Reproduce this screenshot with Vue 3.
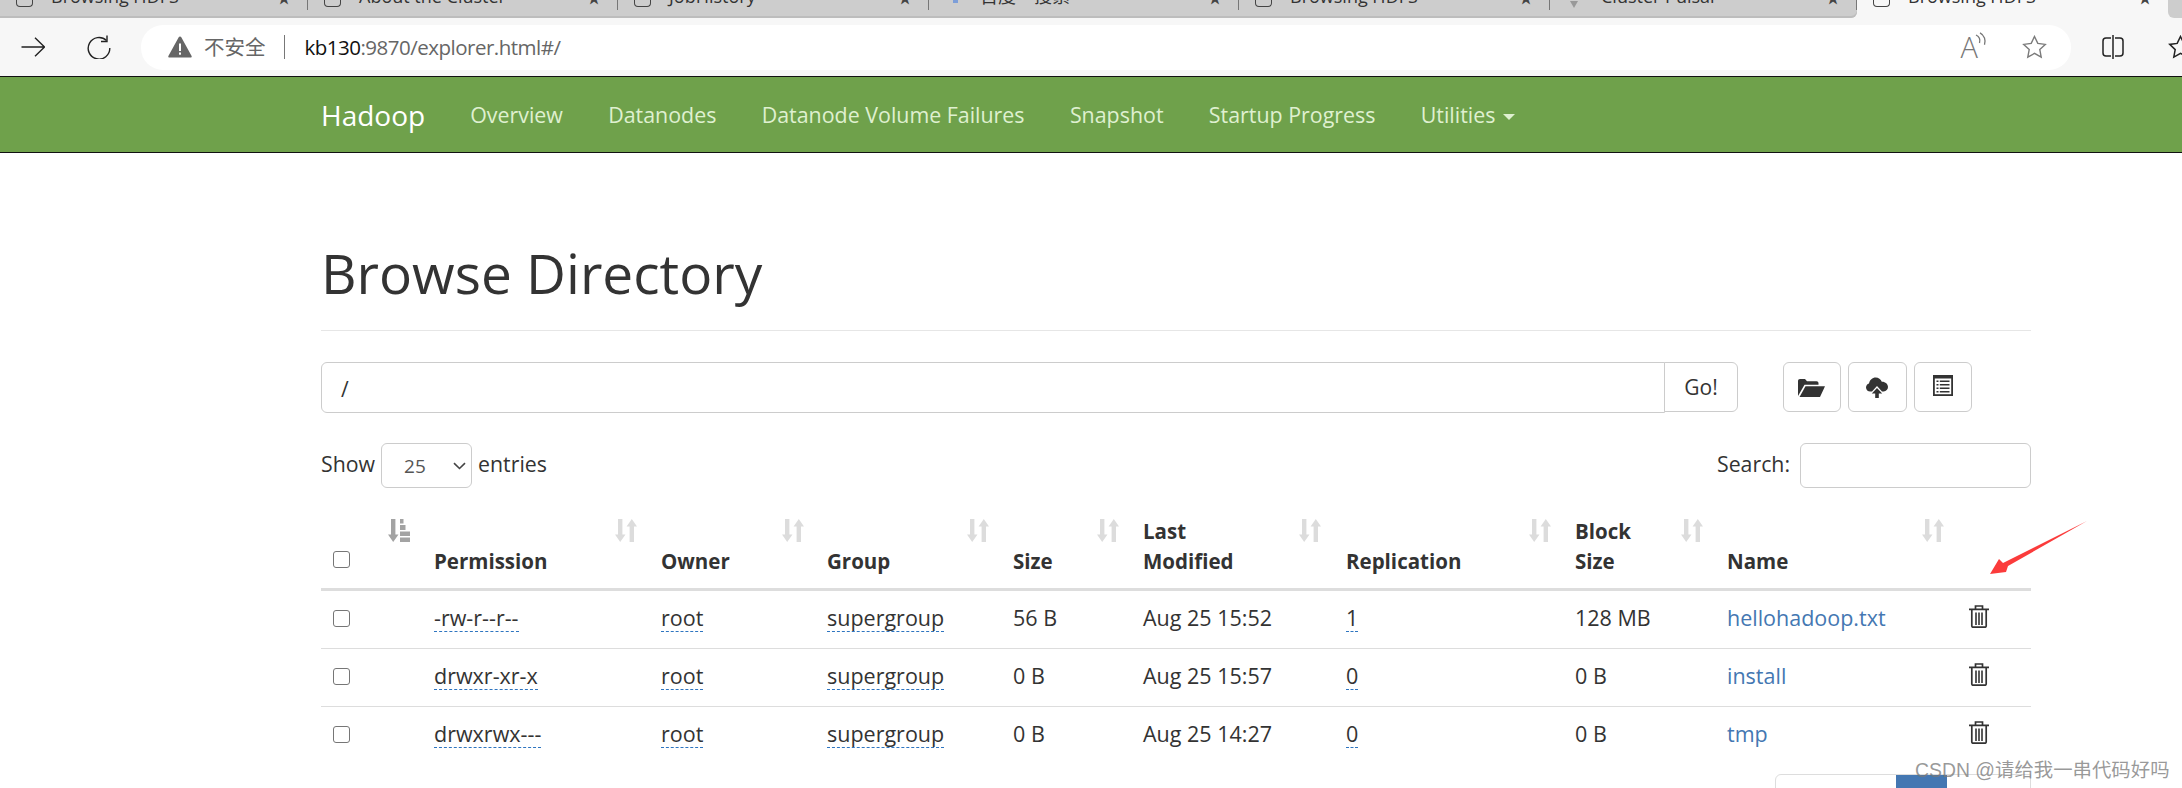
<script setup>
const tabs = [
  { t: 'Browsing HDFS', k: 'page', w: 308 },
  { t: 'About the Cluster', k: 'page', w: 310 },
  { t: 'JobHistory', k: 'page', w: 311 },
  { t: '百度一搜索', k: 'paw', w: 310 },
  { t: 'Browsing HDFS', k: 'page', w: 311 },
  { t: 'Cluster Pulsar', k: 'tri', w: 307 },
]
const nav = ['Overview', 'Datanodes', 'Datanode Volume Failures', 'Snapshot', 'Startup Progress']
const cols = [
  { l: 'Permission', w: 227, s: 181 },
  { l: 'Owner', w: 166, s: 121 },
  { l: 'Group', w: 186, s: 140 },
  { l: 'Size', w: 130, s: 84 },
  { l: 'Last\nModified', w: 203, s: 156 },
  { l: 'Replication', w: 229, s: 183 },
  { l: 'Block\nSize', w: 152, s: 106 },
  { l: 'Name', w: 242, s: 195 },
]
const rows = [
  ['-rw-r--r--', 'root', 'supergroup', '56 B', 'Aug 25 15:52', '1', '128 MB', 'hellohadoop.txt'],
  ['drwxr-xr-x', 'root', 'supergroup', '0 B', 'Aug 25 15:57', '0', '0 B', 'install'],
  ['drwxrwx---', 'root', 'supergroup', '0 B', 'Aug 25 14:27', '0', '0 B', 'tmp'],
]
</script>

<template>
  <div class="page">
    <div class="tabstrip">
      <div class="tabsgray">
        <div v-for="(x, i) in tabs" :key="i" class="tab" :style="{ width: x.w + 'px' }">
          <span v-if="x.k === 'page'" class="fav"></span>
          <span v-else :class="['favmini', x.k]"></span>
          <span class="tabt">{{ x.t }}</span><span class="tabstar">★</span>
        </div>
      </div>
      <div class="tab active"><span class="fav"></span><span class="tabt">Browsing HDFS</span><span class="tabstar">★</span></div>
      <div class="tabtail"></div>
    </div>
    <div class="toolbar">
      <svg class="tool" width="24" height="20" viewBox="0 0 24 20"><path d="M0.500 10h23M14 0.800l9.500 9.200-9.500 9.200" fill="none" stroke="#222" stroke-width="1.400"/></svg>
      <svg class="tool reload" width="24" height="24" viewBox="0 0 24 24"><path d="M19.500 5.500A10.800 10.800 0 1 0 22.800 13" fill="none" stroke="#222" stroke-width="1.400"/><path d="M20 0.500v6h-6" fill="none" stroke="#222" stroke-width="1.400"/></svg>
      <div class="omni">
        <svg width="24" height="22" viewBox="0 0 24 22"><path d="M12 .5c.6 0 1 .3 1.300.8l10.300 18.600c.4.800 0 1.600-1 1.600H1.400c-1 0-1.400-.8-1-1.600L10.700 1.300c.3-.5.700-.8 1.300-.8z" fill="#666"/><rect x="11" y="7.500" width="2" height="7.500" fill="#fff"/><rect x="11" y="16.500" width="2" height="2.200" fill="#fff"/></svg>
        <span class="unsafe">不安全</span><span class="omnisep"></span>
        <span class="url"><b>kb130</b>:9870/explorer.html#/</span>
        <span class="omnifill"></span>
        <span class="read">A<svg class="waves" width="12" height="16" viewBox="0 0 12 16"><path d="M1 3c3 1.500 4.500 4.500 3.500 8M5 .8c4.500 2.200 6 7.500 4.500 12" fill="none" stroke="#777" stroke-width="1.300"/></svg></span>
        <svg width="25" height="24" viewBox="0 0 25 24"><path d="M12.500 1.500l3.300 6.900 7.500 1-5.500 5.200 1.400 7.500-6.700-3.700-6.700 3.700 1.400-7.500-5.500-5.200 7.500-1z" fill="none" stroke="#7a7a7a" stroke-width="1.400"/></svg>
      </div>
      <svg class="split" width="22" height="24" viewBox="0 0 22 24"><path d="M9 3H4C2 3 1 4 1 6v12c0 2 1 3 3 3h5M13 3h5c2 0 3 1 3 3v12c0 2-1 3-3 3h-5" fill="none" stroke="#222" stroke-width="1.500"/><path d="M11 0v24" stroke="#222" stroke-width="1.500"/></svg>
      <svg class="favs" width="25" height="24" viewBox="0 0 25 24"><path d="M12.500 1.500l3.300 6.900 7.500 1-5.500 5.200 1.400 7.500-6.700-3.700-6.700 3.700 1.400-7.500-5.500-5.200 7.500-1z" fill="none" stroke="#222" stroke-width="1.500"/></svg>
    </div>

    <nav class="navbar">
      <div class="navin">
        <span class="brand">Hadoop</span>
        <span v-for="n in nav" :key="n" class="navlink">{{ n }}</span>
        <span class="navlink">Utilities<i class="caret"></i></span>
      </div>
    </nav>

    <main class="container">
      <h1 class="title">Browse Directory</h1>
      <div class="pathrow">
        <div class="pathgroup">
          <div class="pathinput">/</div>
          <div class="btn go">Go!</div>
        </div>
        <div class="btns">
          <div class="btn icon">
            <svg width="27" height="19" viewBox="0 0 27 19"><path d="M0 18V3C0 1.800.8 1 2 1h5l2 2.300h9.500c1.200 0 2 .7 2 2v1.500H6.500z" fill="#333"/><path d="M7.500 8.300H27L22 19H1.500z" fill="#333"/></svg>
          </div>
          <div class="btn icon">
            <svg width="22" height="21" viewBox="0 0 22 21"><path d="M6 14.500H4.200C1.900 14.500 0 12.700 0 10.400c0-1.900 1.200-3.500 3-4C3.700 3 6.400.5 9.700.5c2.800 0 5.100 1.700 6.100 4.200 3.300-.2 6.200 2.200 6.200 5.400 0 2.400-1.900 4.400-4.300 4.400H16l-5-5.500z" fill="#333"/><path d="M11 11 5.800 16.500h3.400V21h3.600v-4.500h3.400z" fill="#333"/></svg>
          </div>
          <div class="btn icon listic">
            <svg width="20" height="21" viewBox="0 0 20 21"><rect x="0" y="0" width="20" height="21" fill="#333"/><rect x="1.800" y="3.500" width="16.400" height="15.700" fill="#fff"/><path d="M3.500 5.500h2v1.600h-2zM6.800 5.500h9.700v1.600H6.800zM3.500 9h2v1.600h-2zM6.800 9h9.700v1.600H6.800zM3.500 12.500h2v1.600h-2zM6.800 12.500h9.700v1.600H6.800zM3.500 16h2v1.600h-2zM6.800 16h9.700v1.600H6.800z" fill="#333"/></svg>
          </div>
        </div>
      </div>

      <div class="controls">
        <div class="ctl">
          <span>Show</span>
          <div class="select"><span>25</span>
            <svg width="13" height="8" viewBox="0 0 13 8"><path d="M1 1.200l5.500 5.300L12 1.200" fill="none" stroke="#444" stroke-width="1.600"/></svg>
          </div>
          <span>entries</span>
        </div>
        <div class="ctl"><span>Search:</span><div class="search"></div></div>
      </div>

      <table class="tbl">
        <thead>
          <tr>
            <th class="chk">
              <span class="cb"></span>
            </th>
            <th class="sortcol">
              <svg class="sort first" width="22" height="23" viewBox="0 0 22 23"><path d="M3 0h4.400v15.500H10.500L5.200 23 0 15.500h3z" fill="#a3a3a3"/><path d="M12 0h3.500v4.500H12zM12 6h5.500v5H12zM12 12.500h10V17H12zM12 18.500h10V23H12z" fill="#a3a3a3"/></svg>
            </th>
            <th v-for="c in cols" :key="c.l" :style="{ width: c.w + 'px' }">
              <svg class="sort" :style="{ left: c.s + 'px' }" width="22" height="23" viewBox="0 0 22 23"><path d="M3 0h4.400v15.500H10.500L5.200 23 0 15.500h3zM14.600 23V7.500h-3L16.800 0 22 7.500h-3V23z" fill="#dcdcdc"/></svg>
              <span class="thl">{{ c.l }}</span>
            </th>
            <th class="last"></th>
          </tr>
        </thead>
        <tbody>
          <tr v-for="(r, i) in rows" :key="i">
            <td class="chk"><span class="cb"></span></td>
            <td class="sortcol"></td>
            <td><span class="dot">{{ r[0] }}</span></td>
            <td><span class="dot">{{ r[1] }}</span></td>
            <td><span class="dot">{{ r[2] }}</span></td>
            <td>{{ r[3] }}</td>
            <td>{{ r[4] }}</td>
            <td><span class="dot">{{ r[5] }}</span></td>
            <td>{{ r[6] }}</td>
            <td><a class="link">{{ r[7] }}</a></td>
            <td class="last">
              <svg class="trash" width="20" height="23" viewBox="0 0 20 23"><path d="M0 4.300h20M6.500 4V1h7v3" fill="none" stroke="#333" stroke-width="1.700"/><path d="M2.800 5v16c0 .8.400 1.200 1.200 1.200h12c.8 0 1.200-.4 1.200-1.200V5" fill="none" stroke="#333" stroke-width="1.700"/><path d="M7 7.500V20M10 7.500V20M13 7.500V20" stroke="#333" stroke-width="1.600"/></svg>
            </td>
          </tr>
        </tbody>
      </table>
      <div class="pager"><span class="pg"></span><span class="pg on"></span></div>
    </main>

    <svg class="arrow" width="100" height="56" viewBox="0 0 100 56"><path d="M99 0 20 45l-2 6-16 2L11 38l4 4z" fill="#fb3b3b"/></svg>
    <div class="wm">CSDN @请给我一串代码好吗</div>
  </div>
</template>

<style>
html, body { margin: 0; background: #fff; overflow: hidden; }
</style>

<style scoped>
.page { position: relative; width: 2182px; height: 788px; overflow: hidden; font-family: "Open Sans", "Noto Sans CJK SC", sans-serif; color: #333; font-size: 21px; }
.tabstrip { height: 18px; background: #f7f7f7; display: flex; overflow: hidden; }
.tabsgray { width: 1857px; flex: none; height: 18px; display: flex; background: #cdcdcd; box-shadow: inset 0 -2px 0 #bdbdbd; border-radius: 0 0 6px 0; }
.tab { height: 10px; flex: none; box-sizing: border-box; border-right: 1px solid #777; display: flex; align-items: flex-start; padding: 0 16px; position: relative; }
.tab.active { width: 311px; height: 18px; border-right: 0; }
.tabtail { flex: 1; background: #cdcdcd; border-radius: 0 0 0 6px; }
.fav { width: 17px; height: 7px; border: 1.500px solid #444; border-top: 0; border-radius: 0 0 4px 4px; box-sizing: border-box; flex: none; }
.favmini { width: 17px; height: 7px; flex: none; }
.favmini.paw::after { content: ""; display: block; width: 5px; height: 3px; background: #7d9ed8; margin-left: 8px; }
.favmini.tri { height: 0; width: 0; border-left: 4px solid transparent; border-right: 4px solid transparent; border-top: 7px solid #999; margin: 1px 5px 0 4px; }
.tabt { margin-left: 18px; margin-top: -13px; font-size: 18px; line-height: 18px; color: #333; white-space: nowrap; }
.tabstar { margin-left: auto; margin-top: -9px; font-size: 14px; line-height: 14px; color: #444; }
.toolbar { height: 58px; background: #f7f7f7; display: flex; align-items: center; box-sizing: border-box; padding: 0 0 0 21px; }
.tool { flex: none; }
.reload { margin-left: 42px; }
.omni { margin-left: 30px; width: 1930px; flex: none; height: 45px; background: #fff; border-radius: 22px; display: flex; align-items: center; box-sizing: border-box; padding: 0 24px 0 27px; }
.unsafe { margin-left: 12px; font-size: 20.500px; color: #666; line-height: 24px; }
.omnisep { width: 1px; height: 24px; background: #777; margin: 0 20px 0 18px; }
.url { font-size: 20.500px; color: #666; letter-spacing: -.5px; }
.url b { font-weight: 400; color: #111; }
.omnifill { flex: 1; }
.read { display: flex; font-size: 29px; line-height: 32px; color: #777; font-weight: 300; margin-right: 35px; }
.waves { margin-left: -3px; margin-top: 1px; }
.split { margin-left: 31px; flex: none; }
.favs { margin-left: 44px; flex: none; }
.navbar { height: 77px; box-sizing: border-box; background: #6fa14b; border-top: 1px solid #111; border-bottom: 1px solid #111; }
.navin { padding-left: 321px; height: 75px; display: flex; align-items: center; }
.brand { font-size: 28px; color: #fff; margin-right: 45px; }
.navlink { font-size: 21.400px; color: #dff0d0; margin-right: 45.300px; white-space: nowrap; }
.caret { display: inline-block; width: 0; height: 0; border-left: 6px solid transparent; border-right: 6px solid transparent; border-top: 6px solid #dff0d0; margin-left: 8px; vertical-align: 3px; }
.container { margin-left: 321px; width: 1710px; }
.title { margin: 0; padding-top: 84px; height: 178px; box-sizing: border-box; font-size: 55px; line-height: 72px; font-weight: 400; color: #333; border-bottom: 1px solid #e6e6e6; }
.pathrow { display: flex; margin-top: 31px; justify-content: space-between; align-items: flex-start; }
.pathgroup { display: flex; width: 1417px; align-items: flex-start; }
.pathinput { flex: 1; height: 51px; box-sizing: border-box; border: 1px solid #ccc; border-radius: 6px 0 0 6px; padding: 0 19px; font-size: 21px; line-height: 52px; }
.btn { height: 50px; box-sizing: border-box; border: 1px solid #ccc; border-radius: 6px; display: flex; align-items: center; justify-content: center; background: #fff; font-size: 21px; }
.go { width: 74px; border-radius: 0 6px 6px 0; margin-left: -1px; }
.btns { display: flex; gap: 7px; margin-right: 59px; }
.icon { width: 58.500px; }
.listic svg { margin-top: -3px; }
.controls { display: flex; justify-content: space-between; margin-top: 30px; }
.ctl { display: flex; align-items: center; gap: 6px; font-size: 21.300px; }
.ctl > span { position: relative; top: -2px; }
.select { width: 91px; height: 45px; box-sizing: border-box; border: 1px solid #ccc; border-radius: 6px; display: flex; align-items: center; justify-content: space-between; padding: 0 5px 0 22px; font-size: 19px; color: #555; }
.search { width: 231px; height: 45px; box-sizing: border-box; border: 1px solid #ccc; border-radius: 6px; margin-left: 4px; }
.tbl { border-collapse: separate; border-spacing: 0; margin-top: 15px; width: 1710px; table-layout: fixed; font-size: 21.500px; }
th { position: relative; height: 85px; padding: 0; text-align: left; vertical-align: bottom; border-bottom: 3px solid #ddd; font-weight: 700; font-size: 20.500px; line-height: 30px; }
.thl { display: block; padding: 0 0 12px 0; white-space: pre-line; }
th.chk, td.chk { width: 40px; }
th.sortcol, td.sortcol { width: 73px; }
th.last, td.last { width: 62px; }
td { height: 52px; padding: 0 0 5px; border-bottom: 1px solid #ddd; white-space: nowrap; vertical-align: middle; }
tbody tr:last-child td { border-bottom: 0; }
.sort { position: absolute; top: 16px; }
.sort.first { left: 27px; }
.cb { display: block; width: 17px; height: 17px; box-sizing: border-box; margin-left: 12px; border: 1.500px solid #767676; border-radius: 3px; }
th.chk .cb { margin-bottom: 20px; }
td.chk .cb { transform: translateY(1px); }
.dot { border-bottom: 1px dashed #2e75c0; display: inline-block; line-height: 26px; }
.link { color: #4477b2; }
.trash { display: block; transform: translateY(-1px); }
.pager { margin: 10px 0 0 1454px; width: 256px; height: 30px; border: 1px solid #ddd; border-radius: 6px 0 0 0; display: flex; box-sizing: border-box; }
.pg { width: 120px; }
.pg.on { width: 51px; background: #4477b2; }
.arrow { position: absolute; left: 1988px; top: 521px; }
.wm { position: absolute; left: 1915px; top: 754px; font-size: 19.400px; color: rgba(120,120,120,.75); font-family: "Liberation Sans", "Noto Sans CJK SC", sans-serif; white-space: nowrap; }
</style>
